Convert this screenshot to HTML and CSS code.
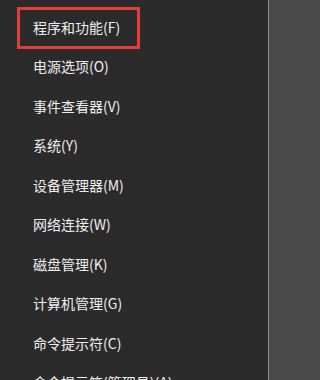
FILE: index.html
```html
<!DOCTYPE html>
<html lang="zh-CN">
<head>
<meta charset="utf-8">
<link rel="stylesheet" href="styles.css">
</head>
<body>
<div class="menu">
  <ul class="items">
    <li class="item">程序和功能(F)</li>
    <li class="item">电源选项(O)</li>
    <li class="item">事件查看器(V)</li>
    <li class="item">系统(Y)</li>
    <li class="item">设备管理器(M)</li>
    <li class="item">网络连接(W)</li>
    <li class="item">磁盘管理(K)</li>
    <li class="item">计算机管理(G)</li>
    <li class="item">命令提示符(C)</li>
    <li class="item">命令提示符(管理员)(A)</li>
  </ul>
  <div class="highlight"></div>
</div>
</body>
</html>
```
FILE: styles.css
```css
html, body {
  margin: 0;
  padding: 0;
}
body {
  width: 272px;
  height: 380px;
  overflow: hidden;
  background: #4a4a4a;
  font-family: "Noto Sans CJK SC", "Microsoft YaHei", sans-serif;
}
.menu {
  position: relative;
  width: 268px;
  height: 380px;
  background: #2b2b2b;
  border-right: 1px solid #8c8c8c;
}
.items {
  list-style: none;
  margin: 0;
  padding: 7px 0 0 33px;
}
.item {
  height: 39.5px;
  display: flex;
  align-items: center;
  color: #eeeeee;
  font-size: 14px;
  white-space: nowrap;
}
.highlight {
  position: absolute;
  left: 17px;
  top: 7px;
  width: 117px;
  height: 36px;
  border: 3px solid #e43b3b;
}
```
